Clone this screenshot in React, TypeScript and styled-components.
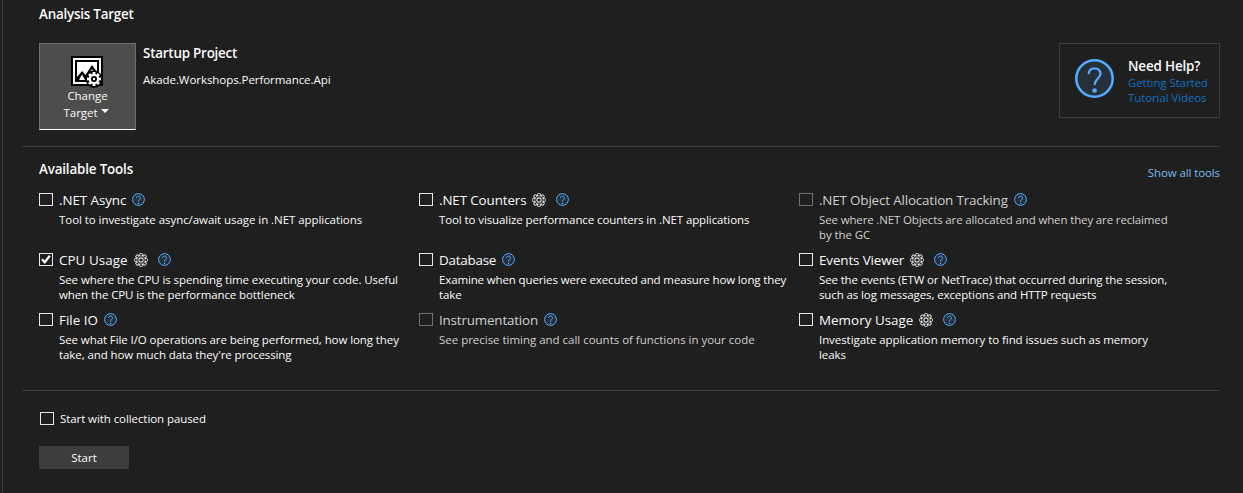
import React from "react";
import styled, { createGlobalStyle } from "styled-components";

const GlobalStyle = createGlobalStyle`
  * { box-sizing: border-box; }
  body {
    margin: 0;
    background: #1f1f1f;
    color: #fafafa;
    font-family: "Open Sans", "Noto Sans", sans-serif;
    font-size: 11.5px;
    line-height: 15px;
    overflow: hidden;
  }
`;

const Page = styled.main`
  height: 493px;
  margin-left: 2px;
  border-left: 1px solid #3d3d3d;
  padding: 6px 23px 0 19px;
`;

const Section = styled.section<{ $height: number; $top?: number }>`
  height: ${(p) => p.$height}px;
  padding: ${(p) => p.$top ?? 0}px 0 0 17px;
`;

const Divider = styled.hr`
  margin: 0;
  border: 0;
  height: 1px;
  background: #3d3d3d;
`;

const Heading = styled.h2<{ $track?: number }>`
  margin: 0;
  font-size: 13.4px;
  font-weight: 600;
  line-height: 17px;
  white-space: nowrap;
  letter-spacing: ${(p) => p.$track ?? -0.22}px;
`;

const TargetRow = styled.div`
  display: flex;
  align-items: flex-start;
  margin-top: 20px;
`;

const TargetButton = styled.button`
  width: 97px;
  height: 87px;
  padding: 12px 0 0;
  border: 1px solid #707070;
  border-bottom: 1px solid #fafafa;
  background: #4d4d4d;
  color: #fafafa;
  font: inherit;
  display: flex;
  flex-direction: column;
  align-items: center;
`;

const ImageIcon = styled.svg`
  margin-right: 1px;
`;

const ButtonLabel = styled.span`
  display: flex;
  flex-direction: column;
  align-items: center;
  margin-top: -1px;
  letter-spacing: -0.05px;
`;

const ButtonLine = styled.span`
  display: flex;
  gap: 4px;
  height: 17px;
  line-height: 17px;
`;

const Project = styled.div`
  margin-left: 7px;
  padding-top: 2px;
  flex: 1;
`;

const ProjectName = styled.div`
  margin-top: 10px;
  letter-spacing: -0.06px;
`;

const HelpBox = styled.aside`
  width: 161px;
  height: 75px;
  border: 1px solid #3d3d3d;
  display: flex;
  padding: 14px 0 0 15px;
  gap: 14px;
`;

const LargeHelp = styled.span`
  display: flex;
  padding-top: 1px;
`;

const HelpLinks = styled.div`
  display: flex;
  flex-direction: column;
`;

const Link = styled.a<{ $color: string }>`
  color: ${(p) => p.$color};
  white-space: nowrap;
  letter-spacing: -0.1px;
`;

const ToolsHeader = styled.header`
  display: flex;
  justify-content: space-between;
  height: 30px;
`;

const ShowAll = styled.div`
  padding-top: 4px;
`;

const ToolGrid = styled.div`
  display: grid;
  grid-template-columns: repeat(3, 380px);
  grid-auto-rows: 60px;
`;

const ToolItem = styled.article<{ $dim?: boolean }>`
  color: ${(p) => (p.$dim ? "#cecece" : "#fafafa")};
`;

const ToolTitle = styled.div`
  display: flex;
  align-items: flex-start;
  height: 19px;
  margin-bottom: 2px;
  padding-top: 2px;
`;

const Box = styled.span<{ $dim?: boolean }>`
  width: 14px;
  height: 13px;
  flex: none;
  border: 1px solid ${(p) => (p.$dim ? "#707070" : "#e6e6e6")};
  display: flex;
  align-items: center;
  justify-content: center;
`;

const Name = styled.span<{ $width: number; $track?: number }>`
  margin: -2px 0 0 6px;
  width: ${(p) => p.$width}px;
  font-size: 13.4px;
  line-height: 19px;
  white-space: nowrap;
  letter-spacing: ${(p) => p.$track ?? 0}px;
`;

const IconSlot = styled.span<{ $gap: number }>`
  display: flex;
  margin-left: ${(p) => p.$gap}px;
`;

const Line = styled.div<{ $track?: number }>`
  margin-left: 20px;
  height: 15px;
  white-space: nowrap;
  letter-spacing: ${(p) => p.$track ?? 0}px;
`;

const PausedOption = styled.label`
  display: flex;
  align-items: center;
  gap: 6px;
  margin-left: 1px;
  height: 15px;
  letter-spacing: -0.08px;
`;

const StartButton = styled.button`
  display: block;
  margin-top: 20px;
  width: 90px;
  height: 23px;
  padding: 0;
  border: 0;
  background: #3d3d3d;
  color: #fafafa;
  font: inherit;
`;

const HelpIcon = ({ size = 13 }: { size?: number }) => {
  const large = size > 20;
  return (
    <svg width={size} height={size} viewBox="0 0 39 39" fill="none" stroke="#55aaff">
      <circle cx="19.5" cy="19.5" r={large ? 18.2 : 17.8} fill="#26303b" strokeWidth={large ? 2.6 : 3} />
      <path d="M13.6 15.2c0-3.500 2.500-5.900 6-5.900s5.900 2.300 5.900 5.500c0 4.500-5.900 5.200-5.900 11.200" strokeWidth={large ? 2.3 : 3} />
      <circle cx="19.600" cy="31.500" r={large ? 2.300 : 2.200} fill="#55aaff" stroke="none" />
    </svg>
  );
};

const teeth = [0, 45, 90, 135, 180, 225, 270, 315];

const GearIcon = () => (
  <svg width="14" height="14" viewBox="0 0 14 14" fill="none" stroke="#dcdcdc">
    {teeth.map((a) => (
      <path key={a} d="M5.500 3.100V1.300q0-.7.7-.7h1.600q.7 0 .7.700v1.800" transform={`rotate(${a} 7 7)`} />
    ))}
    <circle cx="7" cy="7" r="4.200" strokeWidth="0.700" />
    <circle cx="7" cy="7" r="2.100" strokeWidth="1.100" />
  </svg>
);

const CheckIcon = () => (
  <svg width="12" height="11" viewBox="0 0 12 11" fill="none" stroke="#fafafa" strokeWidth="2.200">
    <path d="M2 5.300 4.700 8.200 9.800 1.800" />
  </svg>
);

const ImageGearIcon = () => (
  <ImageIcon width="32" height="32" viewBox="0 0 32 32">
    <path d="M0 0h32v30H0z" fill="#000" />
    <circle cx="23" cy="23" r="8.800" fill="#000" />
    <path d="M2 2h28v26H2z" fill="#fff" />
    <path d="M4 4h24v22H4z" fill="#000" />
    <path d="M6 6h20v18H6z" fill="#fff" />
    <path d="M6 24v-3l5-6 3.500 4L21 9l5 7v8z" fill="#000" />
    <path d="M8 24l3-5.500 3 5.500zM15 22l6-9 3 5-6 6h-2z" fill="#fff" />
    <circle cx="23" cy="23" r="8.400" fill="#000" />
    <circle cx="23" cy="23" r="5.200" fill="#fff" />
    {teeth.map((a) => (
      <path key={a} d="M21.600 16h2.800v3h-2.800z" fill="#fff" transform={`rotate(${a} 23 23)`} />
    ))}
    <circle cx="23" cy="23" r="3" fill="#000" />
    <circle cx="23" cy="23" r="1.200" fill="#fff" />
  </ImageIcon>
);

const Caret = styled.svg`
  margin: 5px 2px 0 0;
`;

const CaretIcon = () => (
  <Caret width="8" height="4" viewBox="0 0 8 4">
    <path d="M0 0h8L4 4z" fill="#fafafa" />
  </Caret>
);

type Tool = {
  name: string;
  width: number;
  track?: number;
  lines: [string, number?][];
  gear?: boolean;
  dim?: boolean;
  checked?: boolean;
};

const tools: Tool[] = [
  { name: ".NET Async", width: 67, track: -0.08, lines: [["Tool to investigate async/await usage in .NET applications", -0.06]] },
  { name: ".NET Counters", width: 87, track: -0.12, gear: true, lines: [["Tool to visualize performance counters in .NET applications", -0.1]] },
  {
    name: ".NET Object Allocation Tracking", width: 189, track: -0.16, dim: true,
    lines: [["See where .NET Objects are allocated and when they are reclaimed", -0.14], ["by the GC", -0.1]],
  },
  {
    name: "CPU Usage", width: 69, track: 0.06, gear: true, checked: true,
    lines: [["See where the CPU is spending time executing your code. Useful", -0.08], ["when the CPU is the performance bottleneck", -0.1]],
  },
  { name: "Database", width: 57, track: -0.22, lines: [["Examine when queries were executed and measure how long they", -0.13], ["take", -0.1]] },
  {
    name: "Events Viewer", width: 85, track: -0.12, gear: true,
    lines: [["See the events (ETW or NetTrace) that occurred during the session,", -0.14], ["such as log messages, exceptions and HTTP requests", -0.11]],
  },
  {
    name: "File IO", width: 39, track: 0,
    lines: [["See what File I/O operations are being performed, how long they", -0.09], ["take, and how much data they're processing", -0.09]],
  },
  { name: "Instrumentation", width: 99, track: -0.17, dim: true, lines: [["See precise timing and call counts of functions in your code", -0.02]] },
  {
    name: "Memory Usage", width: 94, track: 0.03, gear: true,
    lines: [["Investigate application memory to find issues such as memory", -0.07], ["leaks", -0.1]],
  },
];

export default function App() {
  return (
    <>
      <GlobalStyle />
      <Page>
        <Section $height={140}>
          <Heading>Analysis Target</Heading>
          <TargetRow>
            <TargetButton>
              <ImageGearIcon />
              <ButtonLabel>
                <ButtonLine>Change</ButtonLine>
                <ButtonLine>
                  Target <CaretIcon />
                </ButtonLine>
              </ButtonLabel>
            </TargetButton>
            <Project>
              <Heading $track={-0.22}>Startup Project</Heading>
              <ProjectName>Akade.Workshops.Performance.Api</ProjectName>
            </Project>
            <HelpBox>
              <LargeHelp>
                <HelpIcon size={39} />
              </LargeHelp>
              <HelpLinks>
                <Heading $track={-0.14}>Need Help?</Heading>
                <Link $color="#1070c0">Getting Started</Link>
                <Link $color="#1070c0">Tutorial Videos</Link>
              </HelpLinks>
            </HelpBox>
          </TargetRow>
        </Section>
        <Divider />
        <Section $height={243} $top={14}>
          <ToolsHeader>
            <Heading $track={-0.16}>Available Tools</Heading>
            <ShowAll>
              <Link $color="#79b8ea">Show all tools</Link>
            </ShowAll>
          </ToolsHeader>
          <ToolGrid>
            {tools.map((t) => (
              <ToolItem key={t.name} $dim={t.dim}>
                <ToolTitle>
                  <Box $dim={t.dim}>{t.checked && <CheckIcon />}</Box>
                  <Name $width={t.width} $track={t.track}>{t.name}</Name>
                  {t.gear && (
                    <IconSlot $gap={6}>
                      <GearIcon />
                    </IconSlot>
                  )}
                  <IconSlot $gap={t.gear ? 10 : 6}>
                    <HelpIcon />
                  </IconSlot>
                </ToolTitle>
                {t.lines.map(([text, track]) => (
                  <Line key={text} $track={track}>{text}</Line>
                ))}
              </ToolItem>
            ))}
          </ToolGrid>
        </Section>
        <Divider />
        <Section $height={100} $top={20}>
          <PausedOption>
            <Box />
            Start with collection paused
          </PausedOption>
          <StartButton>Start</StartButton>
        </Section>
      </Page>
    </>
  );
}
